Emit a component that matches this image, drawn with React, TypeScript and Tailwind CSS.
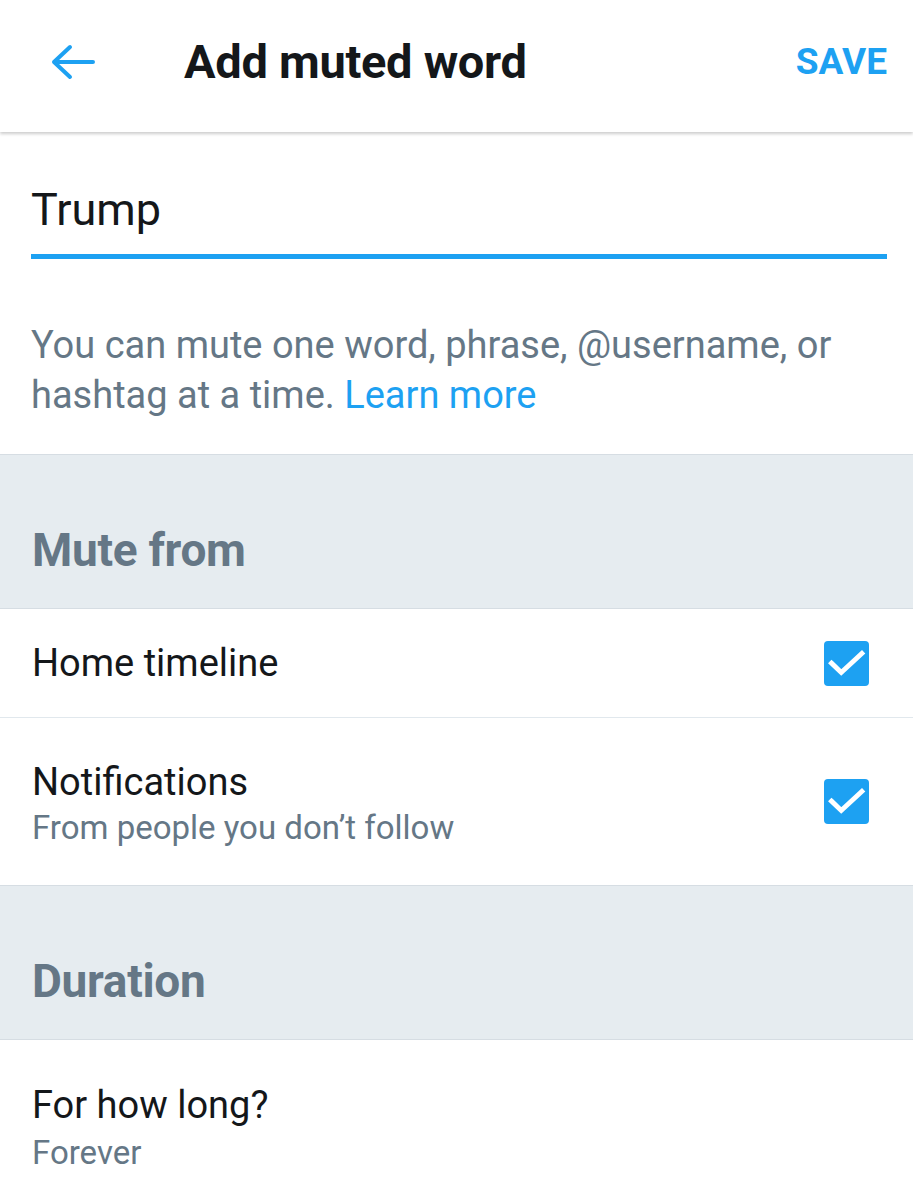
import React from 'react';

const font = { fontFamily: 'Roboto, "Noto Sans", sans-serif' };

const Check = () => (
  <div className="w-[45px] h-[45px] rounded-[4px] bg-[#1da1f2]">
    <svg viewBox="0 0 24 24" className="w-[45px] h-[45px]" fill="none" stroke="white" strokeWidth="2.6" strokeLinecap="square">
      <path d="M4 11.8l5.2 5L20.2 6.6" />
    </svg>
  </div>
);

const SectionHeader = ({ title }: { title: string }) => (
  <div className="h-[155px] bg-[#e6ecf0] border-y border-[#d6dde3] flex items-end pb-[35px] px-[32px]">
    <div className="text-[46px] font-bold text-[#657786] leading-none tracking-[-0.3px]">{title}</div>
  </div>
);

export default function App() {
  return (
    <div className="w-[913px] h-[1200px] bg-white overflow-hidden" style={font}>
      <div className="h-[132px] pb-[8px] flex items-center relative z-10 shadow-[0_2px_3px_rgba(0,0,0,0.2)] bg-white">
        <div className="w-[184px] pl-[50px] flex items-center">
          <svg viewBox="0 0 46 38" className="w-[46px] h-[38px]" fill="none" stroke="#1da1f2" strokeWidth="4" strokeLinecap="round" strokeLinejoin="round">
            <path d="M43 19H4M20 4L4 19l16 15" />
          </svg>
        </div>
        <div className="flex-1 text-[47px] font-bold text-[#14171a] tracking-[-0.3px]">Add muted word</div>
        <div className="pr-[26px] text-[37px] font-bold text-[#1da1f2]">SAVE</div>
      </div>

      <div className="pl-[31px] pr-[26px] pt-[55px]">
        <div className="text-[45px] text-[#14171a] leading-none pb-[22px]">Trump</div>
        <div className="h-[5px] bg-[#1da1f2]" />
        <div className="pt-[61px] pb-[34px] text-[38px] leading-[50px] text-[#657786]">
          You can mute one word, phrase, @username, or hashtag at a time.{' '}
          <span className="text-[#1da1f2]">Learn more</span>
        </div>
      </div>

      <SectionHeader title="Mute from" />

      <div className="h-[109px] flex items-center justify-between px-[32px] border-b border-[#e1e8ed]">
        <div className="text-[38px] text-[#14171a]">Home timeline</div>
        <div className="pr-[12px]"><Check /></div>
      </div>

      <div className="h-[167px] flex items-center justify-between px-[32px]">
        <div className="pt-[6px]">
          <div className="text-[38px] text-[#14171a] leading-[46px]">Notifications</div>
          <div className="text-[33px] text-[#657786] leading-[46px]">From people you don’t follow</div>
        </div>
        <div className="pr-[12px]"><Check /></div>
      </div>

      <SectionHeader title="Duration" />

      <div className="pt-[42px] px-[32px]">
        <div className="text-[38px] text-[#14171a] leading-[47px]">For how long?</div>
        <div className="text-[33px] text-[#657786] leading-[47px]">Forever</div>
      </div>
    </div>
  );
}
